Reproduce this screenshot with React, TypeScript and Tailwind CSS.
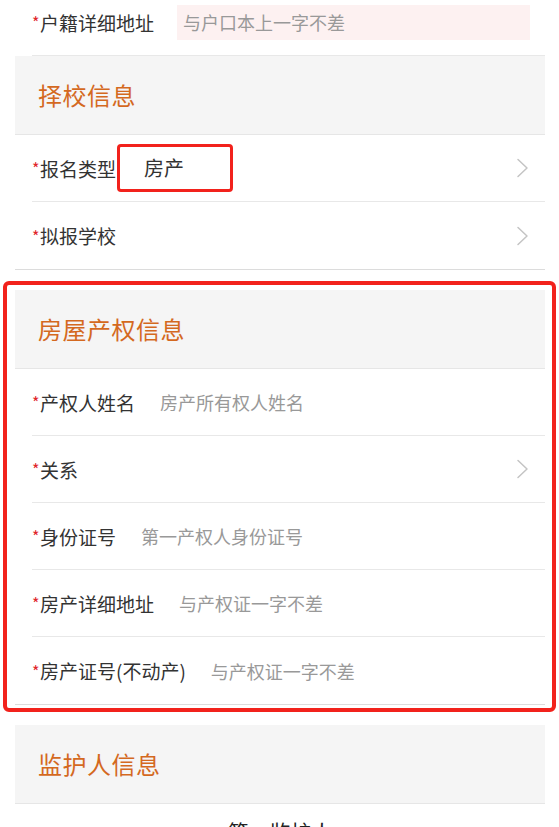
import type { ReactNode } from "react";

const font = { fontFamily: '"Noto Sans CJK SC", "Noto Sans", sans-serif' };

function Chevron() {
  return (
    <svg width="13" height="20" viewBox="0 0 13 20" fill="none" className="shrink-0">
      <path d="M2 1.5 L11 10 L2 18.5" stroke="#c4c4c4" strokeWidth="1.5" strokeLinejoin="round" strokeLinecap="round" />
    </svg>
  );
}

function Star() {
  return <span className="text-[16px] text-[#e0242a] leading-none w-[8px] shrink-0">*</span>;
}

function SectionHeader({ title }: { title: string }) {
  return (
    <div className="h-[79px] bg-[#f5f5f5] border-b border-[#e6e6e6] flex items-center pl-[23px]">
      <span className="text-[24px] leading-none text-[#d4691f] tracking-[0.5px]">{title}</span>
    </div>
  );
}

type RowProps = {
  label: string;
  placeholder?: string;
  arrow?: boolean;
  last?: boolean;
  children?: ReactNode;
};

function Row({ label, placeholder, arrow, last, children }: RowProps) {
  return (
    <div className={last ? "border-b border-[#dcdcdc]" : "pl-[17px]"}>
      <div
        className={
          "h-[67px] flex items-center pr-[16px] " +
          (last ? "pl-[17px]" : "border-b border-[#e8e8e8]")
        }
      >
        <Star />
        <span className="text-[19px] text-[#333] whitespace-nowrap leading-none">{label}</span>
        {placeholder && (
          <span className="ml-[25px] text-[18px] text-[#999] whitespace-nowrap leading-none">{placeholder}</span>
        )}
        {children}
        <div className="flex-1" />
        {arrow && <Chevron />}
      </div>
    </div>
  );
}

export default function App() {
  return (
    <div className="w-[559px] h-[827px] overflow-hidden bg-white" style={font}>
      <div className="pl-[15px] pr-[14px]">
        {/* 户籍 row, cut off at the top */}
        <div className="pl-[17px] -mt-[11px]">
          <div className="h-[67px] flex items-center pr-[15px] border-b border-[#e8e8e8]">
            <Star />
            <span className="text-[19px] text-[#333] whitespace-nowrap leading-none">户籍详细地址</span>
            <div className="ml-[23px] flex-1 h-[35px] bg-[#fdf1f1] flex items-center pl-[6px]">
              <span className="text-[18px] text-[#999] whitespace-nowrap leading-none">与户口本上一字不差</span>
            </div>
          </div>
        </div>

        {/* 择校信息 */}
        <SectionHeader title="择校信息" />
        <Row label="报名类型" arrow>
          <div className="ml-[1px] w-[116px] h-[48px] border-[3px] border-[#f2221c] rounded-[4px] flex items-center pl-[24px]">
            <span className="text-[20px] text-[#333] leading-none">房产</span>
          </div>
        </Row>
        <Row label="拟报学校" arrow last />

        {/* 房屋产权信息, outlined */}
        <div className="mt-[11px] -ml-[12px] -mr-[11px] border-[4px] border-[#f2221c] rounded-[6px] pl-[8px] pr-[7px] pt-[5px] pb-[3px]">
          <SectionHeader title="房屋产权信息" />
          <Row label="产权人姓名" placeholder="房产所有权人姓名" />
          <Row label="关系" arrow />
          <Row label="身份证号" placeholder="第一产权人身份证号" />
          <Row label="房产详细地址" placeholder="与产权证一字不差" />
          <Row label="房产证号(不动产)" placeholder="与产权证一字不差" last />
        </div>

        {/* 监护人信息 */}
        <div className="mt-[13px]">
          <SectionHeader title="监护人信息" />
          <div className="pt-[17px] text-center">
            <span className="text-[21px] text-[#222] leading-none">第一监护人</span>
          </div>
        </div>
      </div>
    </div>
  );
}
